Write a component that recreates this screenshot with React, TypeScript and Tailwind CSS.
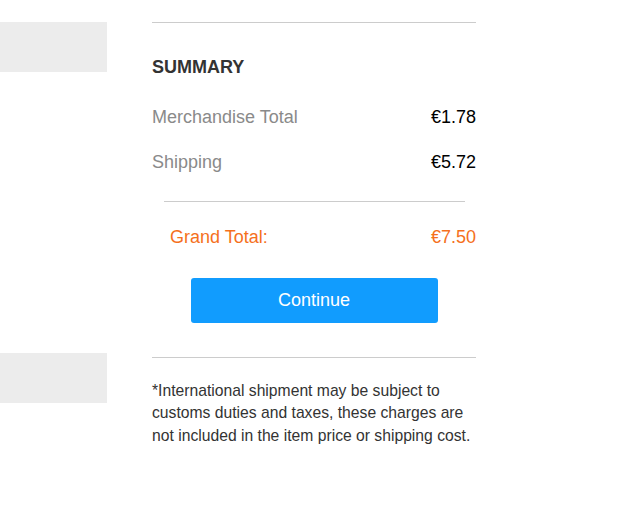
export default function App() {
  const rows = [
    { label: 'Merchandise Total', value: '€1.78' },
    { label: 'Shipping', value: '€5.72' },
  ];

  return (
    <div className="flex min-h-[516px] w-[626px] bg-white font-['Liberation_Sans',Arial,sans-serif]">
      {/* Left placeholders */}
      <div className="w-[107px] shrink-0 pt-[22px]">
        <div className="h-[50px] bg-[#ececec]" />
        <div className="mt-[281px] h-[50px] bg-[#ececec]" />
      </div>

      {/* Summary column */}
      <div className="ml-[45px] w-[324px] pt-[22px]">
        <div className="border-t border-[#cccccc]" />
        <h2 className="mt-[32px] text-[18px] leading-[24px] font-bold text-[#333333]">SUMMARY</h2>

        <div className="mt-[26px] flex flex-col gap-[21px]">
          {rows.map((r) => (
            <div key={r.label} className="flex h-[24px] items-center justify-between text-[18px] leading-[24px]">
              <span className="text-[#8a8a8a]">{r.label}</span>
              <span className="text-black">{r.value}</span>
            </div>
          ))}
        </div>

        <div className="mt-[27px] ml-[12px] mr-[11px] border-t border-[#cccccc]" />

        <div className="mt-[23px] flex h-[24px] items-center justify-between pl-[18px] text-[18px] leading-[24px] text-[#f5701c]">
          <span>Grand Total:</span>
          <span>€7.50</span>
        </div>

        <div className="mt-[29px] flex justify-center">
          <button className="h-[45px] w-[247px] rounded-[3px] bg-[#119cfe] text-[18px] text-white">
            Continue
          </button>
        </div>

        <div className="mt-[34px] border-t border-[#cccccc]" />

        <p className="mt-[22px] text-[15.7px] leading-[22.4px] text-[#333333]">
          *International shipment may be subject to customs duties and taxes, these charges are not included in the item price or shipping cost.
        </p>
      </div>
    </div>
  );
}
